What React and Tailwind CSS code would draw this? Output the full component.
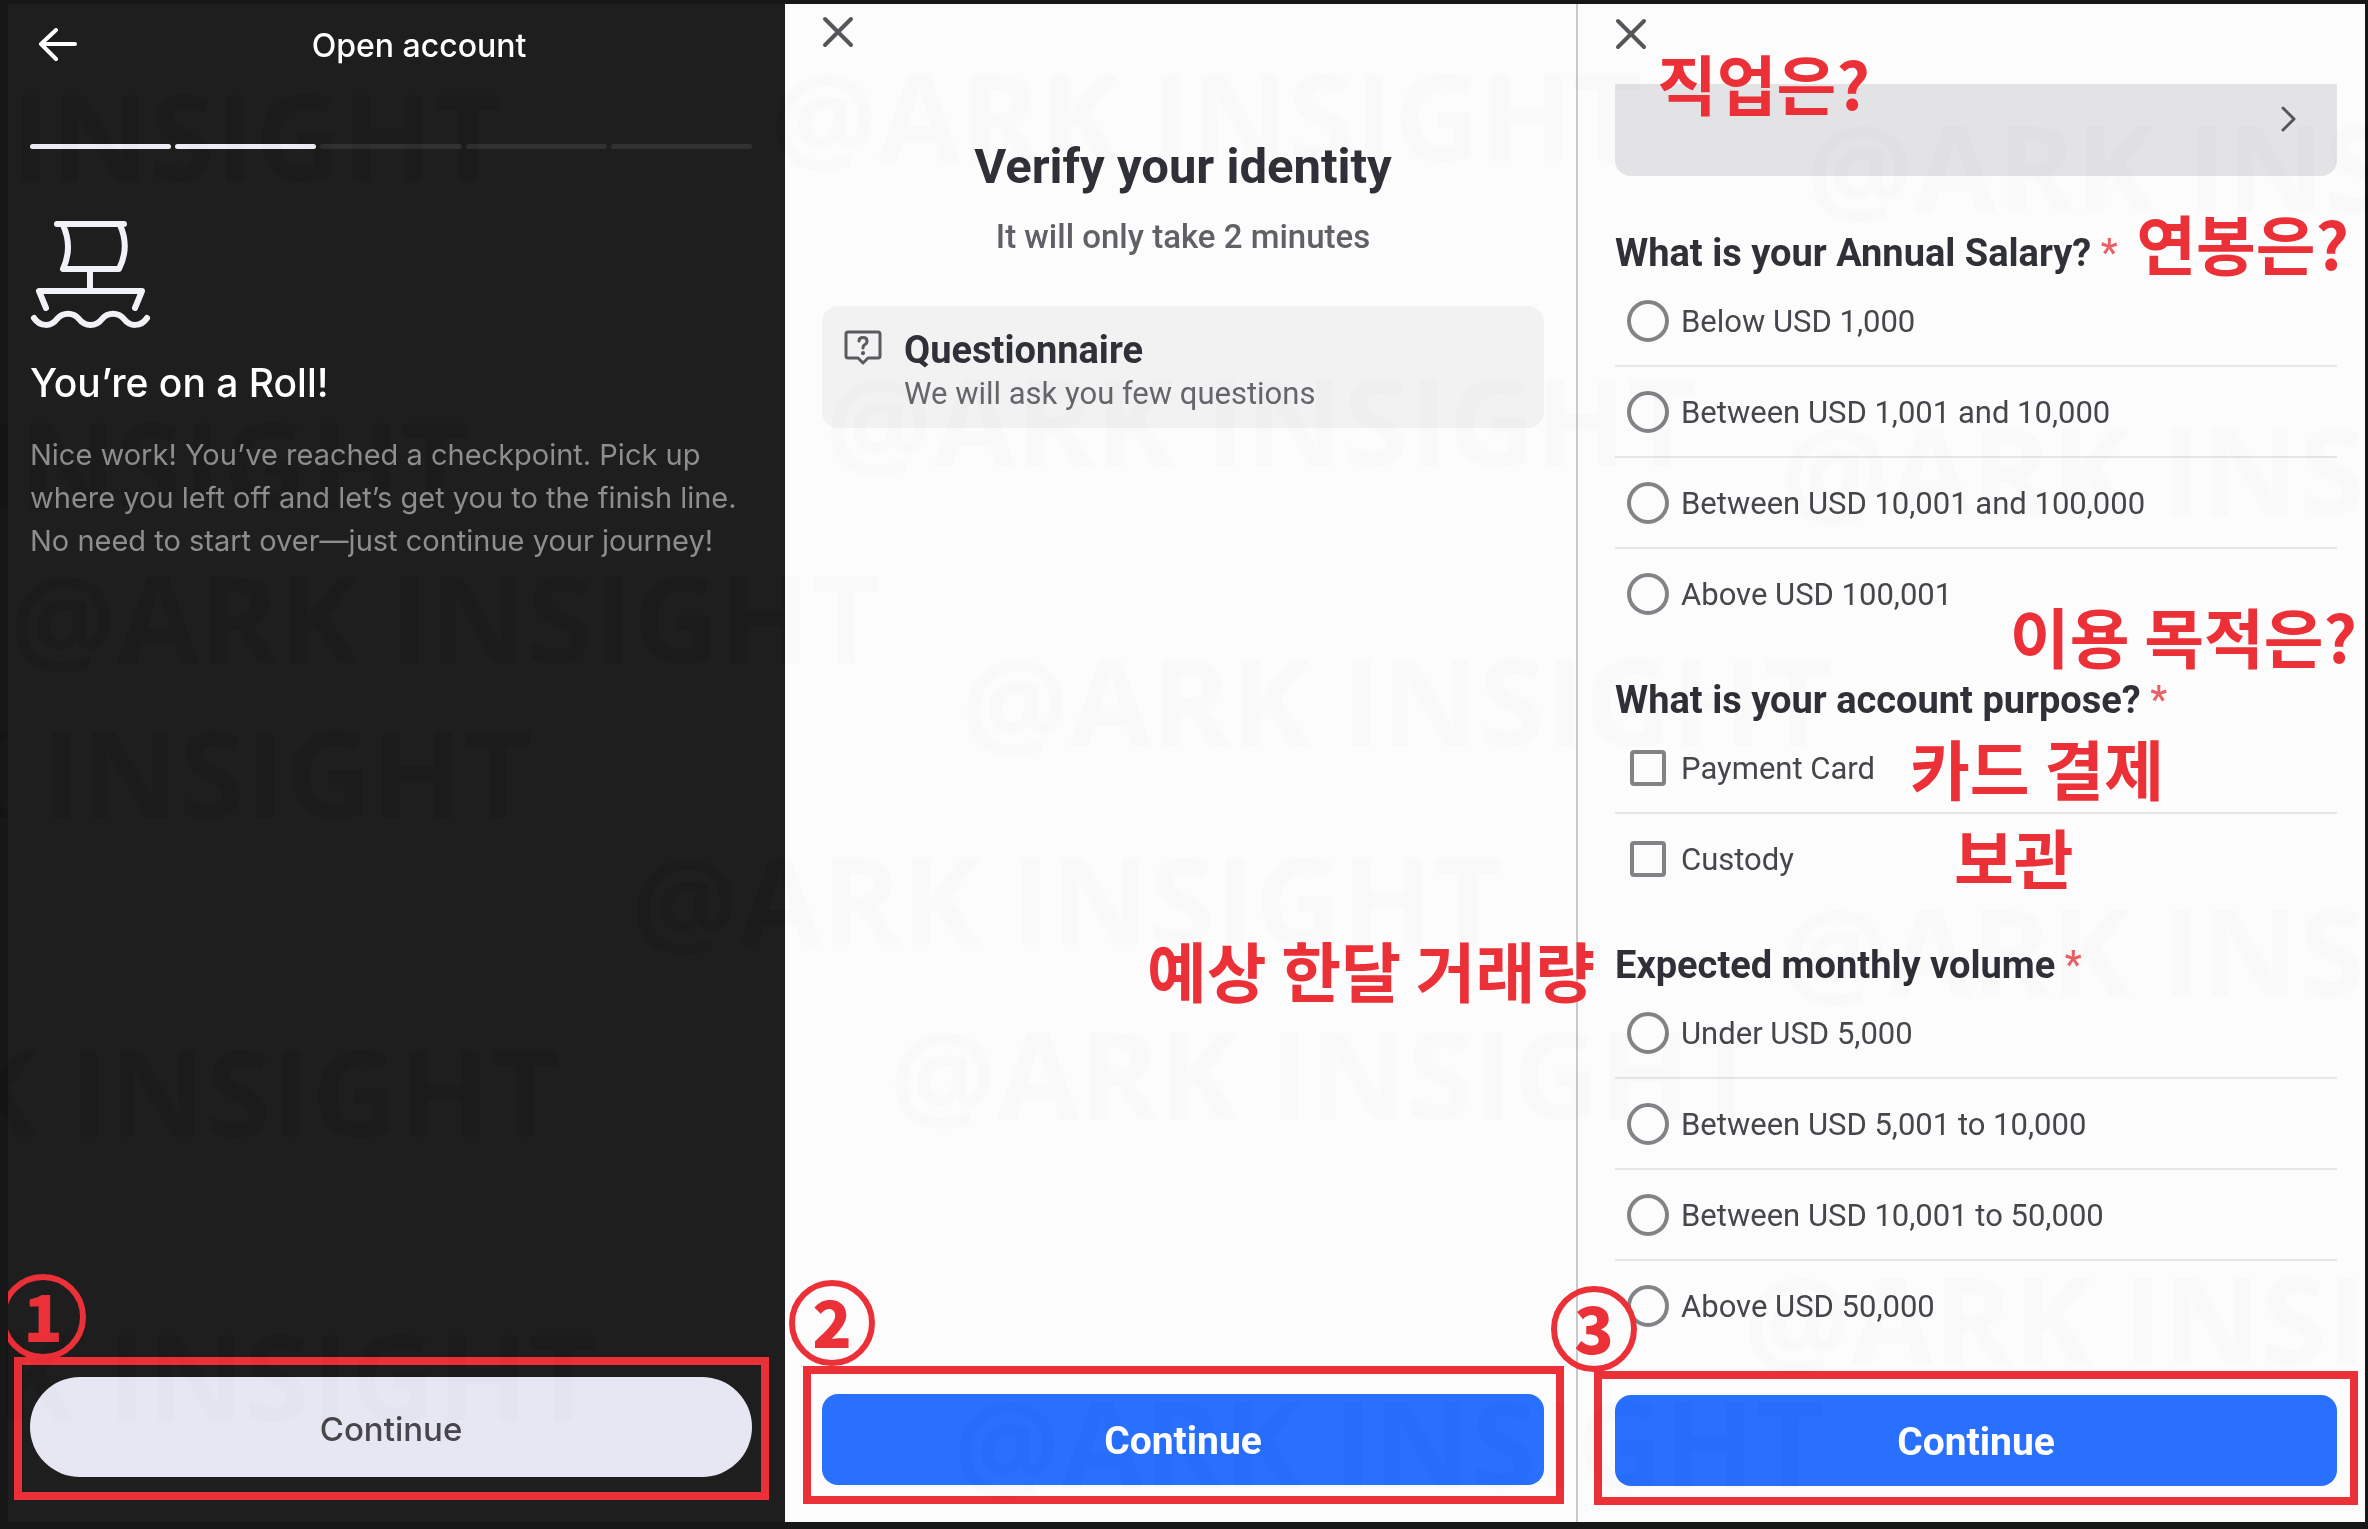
import { useState } from "react";

const MARKS = [
  { left: -369, top: 180 },
  { left: -402, top: 508 },
  { left: 9, top: 662 },
  { left: -339, top: 817 },
  { left: -312, top: 1136 },
  { left: -274, top: 1420 },
  { left: 770, top: 160 },
  { left: 825, top: 465 },
  { left: 961, top: 745 },
  { left: 631, top: 944 },
  { left: 889, top: 1118 },
  { left: 953, top: 1487 },
  { left: 1806, top: 211 },
  { left: 1781, top: 514 },
  { left: 1781, top: 995 },
  { left: 1743, top: 1363 },
];

function Watermarks() {
  return (
    <div aria-hidden="true" className="absolute inset-0 overflow-hidden pointer-events-none select-none mix-blend-difference">
      {MARKS.map((mark) => (
        <span
          key={`${mark.left}-${mark.top}`}
          className="absolute -mt-[105px] whitespace-nowrap font-['Open_Sans',sans-serif] text-[120px] leading-[120px] font-bold text-[#030303]"
          style={{ left: mark.left, top: mark.top }}
        >
          @ARK INSIGHT
        </span>
      ))}
    </div>
  );
}

function StepNumber({ children, className }) {
  return (
    <span
      className={`absolute flex size-[86px] items-center justify-center rounded-full border-[6px] border-[#ec3037] pb-[6px] font-['Noto_Sans_CJK_KR',sans-serif] text-[65px] leading-none font-black text-[#ec3037] ${className}`}
    >
      {children}
    </span>
  );
}

function Note({ children, className }) {
  return (
    <span
      className={`absolute z-10 whitespace-nowrap font-['Noto_Sans_CJK_KR',sans-serif] text-[65px] leading-[64px] font-bold text-[#ec3037] ${className}`}
    >
      {children}
    </span>
  );
}

function CloseButton() {
  return (
    <button type="button" aria-label="Close" className="block text-[#55565a]">
      <svg className="size-8" viewBox="0 0 32 32" fill="none" stroke="currentColor" strokeWidth="4" strokeLinecap="round">
        <path d="M3 3L29 29M29 3L3 29" />
      </svg>
    </button>
  );
}

function ShipIcon() {
  return (
    <svg
      className="h-[112px] w-[124px]"
      viewBox="30 218 124 112"
      fill="none"
      stroke="#f1f1f8"
      strokeWidth="6"
      strokeLinecap="round"
      strokeLinejoin="round"
    >
      <path d="M57 225H124" />
      <path d="M63 226Q73 248 63 270H119Q130 248 120 226" />
      <path d="M90 270V292" />
      <path d="M46 309L39 292H142L135 309" />
      <path d="M34 319C40 328 51 328 57 320C63 313 73 313 79 320C85 328 96 328 102 320C108 313 118 313 124 320C130 328 141 328 147 319" />
    </svg>
  );
}

function QuestionIcon() {
  return (
    <svg className="h-[36px] w-[38px] text-[#5a5b60]" viewBox="0 0 38 36" fill="none" stroke="currentColor" strokeWidth="3" strokeLinejoin="round" strokeLinecap="round">
      <path d="M4 2H34Q36 2 36 4V26Q36 28 34 28H24L19 33L14 28H4Q2 28 2 26V4Q2 2 4 2Z" />
      <path d="M15 11Q15 7.500 19 7.500T23 11Q23 13.500 21 14.500T19 18" />
      <path d="M19 23V23.200" strokeWidth="4" />
    </svg>
  );
}

const SALARY = ["Below USD 1,000", "Between USD 1,001 and 10,000", "Between USD 10,001 and 100,000", "Above USD 100,001"];
const PURPOSE = ["Payment Card", "Custody"];
const VOLUME = ["Under USD 5,000", "Between USD 5,001 to 10,000", "Between USD 10,001 to 50,000", "Above USD 50,000"];

function Question({ title, name, type = "radio", options, selected, onToggle, children }) {
  return (
    <div className="relative">
      <fieldset>
        <legend className="h-12 text-[38px] leading-[50px] font-bold text-[#303138]">
          {title} <span className="font-medium text-[#ea6067]">*</span>
        </legend>
        {options.map((option) => (
          <label
            key={option}
            className="flex h-[91px] items-center gap-3 border-b-2 border-[#e6e6e8] pl-3 text-[31px] text-[#46474c] last-of-type:border-transparent"
          >
            <span className="flex w-[42px] justify-center">
              <input
                type={type}
                name={name}
                checked={selected.includes(option)}
                onChange={() => onToggle(name, type, option)}
                className={
                  type === "radio"
                    ? "size-[42px] appearance-none rounded-full border-4 border-[#838387] checked:bg-[#2970ff]"
                    : "size-9 appearance-none rounded-sm border-4 border-[#838387] checked:bg-[#2970ff]"
                }
              />
            </span>
            <span className="pt-1">{option}</span>
          </label>
        ))}
      </fieldset>
      {children}
    </div>
  );
}

function BlueButton() {
  return (
    <button type="button" className="block h-[91px] w-full rounded-2xl bg-[#2970ff] pt-1 text-[39px] font-bold text-white">
      Continue
    </button>
  );
}

export default function App() {
  const [answers, setAnswers] = useState({ salary: [], purpose: [], volume: [] });

  const toggle = (name, type, option) => {
    setAnswers((prev) => {
      if (type === "radio") return { ...prev, [name]: [option] };
      const list = prev[name];
      return { ...prev, [name]: list.includes(option) ? list.filter((o) => o !== option) : [...list, option] };
    });
  };

  return (
    <div className="relative flex min-h-screen bg-[#171717] pt-1 pr-[3px] pb-[7px] pl-2 font-[Roboto,sans-serif]">
      <div className="grid flex-1 grid-cols-[777fr_793fr_787fr]">
        {/* Step 1: checkpoint */}
        <section className="relative flex flex-col overflow-hidden bg-[#1e1e1e] pr-[33px] pb-[45px] pl-[22px] font-[Inter,sans-serif] text-white">
          <header className="flex h-[84px] items-center">
            <button type="button" aria-label="Back" className="ml-2">
              <svg className="h-9 w-10" viewBox="0 0 40 36" fill="none" stroke="currentColor" strokeWidth="4" strokeLinecap="round" strokeLinejoin="round">
                <path d="M18 2L3 16L18 31M3 16H37" />
              </svg>
            </button>
            <h1 className="flex-1 pl-2 text-center text-[32px] font-medium">Open account</h1>
          </header>

          <div className="mt-14 grid grid-cols-5 gap-1">
            <span className="h-[5px] rounded-full bg-[#ededf5]"></span>
            <span className="h-[5px] rounded-full bg-[#ededf5]"></span>
            <span className="h-[5px] rounded-full bg-[#313133]"></span>
            <span className="h-[5px] rounded-full bg-[#313133]"></span>
            <span className="h-[5px] rounded-full bg-[#313133]"></span>
          </div>

          <div className="mt-[68px]">
            <ShipIcon />
          </div>
          <h2 className="mt-7 text-[39px] leading-[52px] font-medium">You’re on a Roll!</h2>
          <p className="mt-6 text-[29px] leading-[43px] whitespace-nowrap text-[#8e8e91]">
            Nice work! You’ve reached a checkpoint. Pick up
            <br />
            where you left off and let’s get you to the finish line.
            <br />
            No need to start over—just continue your journey!
          </p>

          <div className="relative mt-auto">
            <button type="button" className="block h-[100px] w-full rounded-full bg-[#e6e7f2] pt-[6px] text-[33px] font-medium text-[#47474b]">
              Continue
            </button>
            <div className="pointer-events-none absolute -top-5 -right-[17px] -bottom-[23px] -left-4 border-8 border-[#ec3037]"></div>
            <StepNumber className="-top-[103px] -left-[30px]">1</StepNumber>
          </div>
        </section>

        {/* Step 2: identity check */}
        <section className="relative flex flex-col border-r-2 border-[#c9c9cb] bg-[#fcfcfc] pt-3 pr-8 pb-[37px] pl-[37px]">
          <CloseButton />
          <h1 className="mt-[89px] text-center text-[49px] leading-[60px] font-bold text-[#2f3038]">Verify your identity</h1>
          <p className="mt-5 text-center text-[33px] leading-[40px] font-medium text-[#606167]">It will only take 2 minutes</p>

          <div className="mt-[49px] flex h-[122px] gap-[22px] rounded-2xl bg-[#f2f2f3] pt-6 pl-[22px]">
            <QuestionIcon />
            <div>
              <h2 className="text-[38px] leading-10 font-bold text-[#303138]">Questionnaire</h2>
              <p className="mt-1 text-[31px] leading-10 text-[#66676c]">We will ask you few questions</p>
            </div>
          </div>

          <div className="relative mt-auto">
            <BlueButton />
            <div className="pointer-events-none absolute -top-7 -right-5 -bottom-[19px] -left-[19px] border-8 border-[#ec3037]"></div>
            <StepNumber className="-top-[114px] -left-[33px]">2</StepNumber>
          </div>
        </section>

        {/* Step 3: questionnaire */}
        <section className="relative flex flex-col bg-[#fcfcfc] pt-[14px] pr-7 pb-9 pl-[37px]">
          <CloseButton />
          <button
            type="button"
            aria-label="직업은?"
            className="relative mt-[34px] flex h-[92px] items-center justify-end rounded-b-2xl bg-[#e3e3e5] pr-[38px] pb-[22px] text-[#55565a]"
          >
            <svg className="h-7 w-5" viewBox="0 0 20 28" fill="none" stroke="currentColor" strokeWidth="3" strokeLinecap="round" strokeLinejoin="round">
              <path d="M4 3L15 14L4 25" />
            </svg>
            <Note className="-top-[34px] left-[42px]">직업은?</Note>
          </button>

          <form className="mt-[52px] flex flex-col gap-[35px]">
            <Question title="What is your Annual Salary?" name="salary" options={SALARY} selected={answers.salary} onToggle={toggle}>
              <Note className="-top-[18px] -right-3">연봉은?</Note>
            </Question>
            <Question title="What is your account purpose?" name="purpose" type="checkbox" options={PURPOSE} selected={answers.purpose} onToggle={toggle}>
              <Note className="-top-[72px] -right-5">이용 목적은?</Note>
              <Note className="top-[60px] left-[295px]">카드 결제</Note>
              <Note className="top-[149px] left-[339px]">보관</Note>
            </Question>
            <Question title="Expected monthly volume" name="volume" options={VOLUME} selected={answers.volume} onToggle={toggle}>
              <Note className="-top-[3px] -left-[468px]">예상 한달 거래량</Note>
            </Question>
          </form>

          <div className="relative mt-auto">
            <BlueButton />
            <div className="pointer-events-none absolute -top-6 -right-[21px] -bottom-[19px] -left-[21px] border-8 border-[#ec3037]"></div>
            <StepNumber className="-top-[109px] -left-16">3</StepNumber>
          </div>
        </section>
      </div>
      <Watermarks />
    </div>
  );
}
